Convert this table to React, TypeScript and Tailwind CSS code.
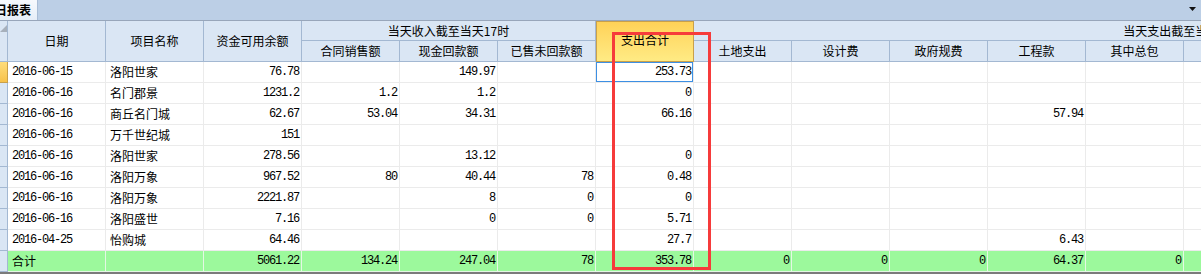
import React from 'react';

const cjk = "font-['Noto_Sans_CJK_SC','Noto_Sans_CJK_JP',sans-serif]";
const mono = "font-['Liberation_Mono',monospace] text-[12px] tracking-[-1.2px]";

type Row = { date: string; name: string; vals: string[] };

// vals: 资金可用余额, 合同销售额, 现金回款额, 已售未回款额, 支出合计, 土地支出, 设计费, 政府规费, 工程款, 其中总包
const rows: Row[] = [
  { date: '2016-06-15', name: '洛阳世家', vals: ['76.78', '', '149.97', '', '253.73'] },
  { date: '2016-06-16', name: '名门郡景', vals: ['1231.2', '1.2', '1.2', '', '0'] },
  { date: '2016-06-16', name: '商丘名门城', vals: ['62.67', '53.04', '34.31', '', '66.16', '', '', '', '57.94'] },
  { date: '2016-06-16', name: '万千世纪城', vals: ['151', '', '', '', ''] },
  { date: '2016-06-16', name: '洛阳世家', vals: ['278.56', '', '13.12', '', '0'] },
  { date: '2016-06-16', name: '洛阳万象', vals: ['967.52', '80', '40.44', '78', '0.48'] },
  { date: '2016-06-16', name: '洛阳万象', vals: ['2221.87', '', '8', '0', '0'] },
  { date: '2016-06-16', name: '洛阳盛世', vals: ['7.16', '', '0', '0', '5.71'] },
  { date: '2016-04-25', name: '怡购城', vals: ['64.46', '', '', '', '27.7', '', '', '', '6.43'] },
];

const totals = ['5061.22', '134.24', '247.04', '78', '353.78', '0', '0', '0', '64.37', '0'];

const subHeads = ['合同销售额', '现金回款额', '已售未回款额'];
const outHeads = ['土地支出', '设计费', '政府规费', '工程款', '其中总包', '', '', '', '', ''];

function DataRow({ row, index }: { row: Row; index: number }) {
  const cells = Array.from({ length: 15 }, (_, i) => row.vals[i] ?? '');
  return (
    <div className="grid grid-cols-[8px_repeat(17,98px)] h-[21px] w-max">
      {index === 0 ? (
        <div className="border-r border-b border-[#c9a04a] bg-linear-to-b from-[#ffdd7a] to-[#f7c24a]" />
      ) : (
        <div className="border-r border-b border-[#a3b8d2] bg-[#dae6f4]" />
      )}
      <div className={`border-r border-b border-[#ebebeb] pl-1 flex items-center ${mono}`}>{row.date}</div>
      <div className={`border-r border-b border-[#ebebeb] pl-1 flex items-center text-[12px] ${cjk}`}>{row.name}</div>
      {cells.map((v, i) => (
        <div
          key={i}
          className={`border-r border-b border-[#ebebeb] pr-[2px] flex items-center justify-end ${mono} ${
            index === 0 && i === 4 ? 'shadow-[inset_0_0_0_1px_#3d8fe3]' : ''
          }`}
        >
          {v}
        </div>
      ))}
    </div>
  );
}

export default function App() {
  return (
    <div className="relative w-[1201px] h-[274px] overflow-hidden bg-white text-black">
      {/* tab strip */}
      <div className="h-[21px] bg-[#bccfe6] border-b border-[#98a6ba] flex items-stretch justify-between">
        <div className="w-[38px] bg-linear-to-b from-[#f6f9fd] to-[#e6eef8] border-r border-[#a9bdd6] overflow-hidden flex items-center">
          <span className={`ml-[-5px] whitespace-nowrap font-bold text-[12px] ${cjk}`}>日报表</span>
        </div>
        <svg width="8" height="5" viewBox="0 0 8 5" className="mr-[4px] mt-[7px]">
          <path d="M0 0h7L3.5 4z" fill="#111" />
        </svg>
      </div>

      {/* header */}
      <div className={`grid grid-cols-[8px_repeat(17,98px)] grid-rows-[20px_21px] w-max bg-[#dae6f4] text-[12px] ${cjk}`}>
        <div className="row-span-2 border-r border-b border-[#a3b8d2] relative">
          <svg width="8" height="8" viewBox="0 0 8 8" className="absolute left-0 top-[4px]">
            <path d="M7 0v7H0z" fill="#a7b0bb" />
          </svg>
        </div>
        {['日期', '项目名称', '资金可用余额'].map((t) => (
          <div key={t} className="row-span-2 border-r border-b border-[#a3b8d2] flex items-center justify-center">
            {t}
          </div>
        ))}
        <div className="col-span-3 border-r border-b border-[#a3b8d2] flex items-center justify-center whitespace-nowrap">
          当天收入截至当天17时
        </div>
        <div className="row-span-2 border border-[#c9a04a] bg-linear-to-b from-[#ffd257] to-[#ffeb84] flex items-center justify-center pb-[4px]">
          支出合计
        </div>
        <div className="col-span-10 border-b border-[#a3b8d2] flex items-center justify-center whitespace-nowrap">
          当天支出截至当天17时
        </div>
        {subHeads.map((t) => (
          <div key={t} className="border-r border-b border-[#a3b8d2] flex items-center justify-center">
            {t}
          </div>
        ))}
        {outHeads.map((t, i) => (
          <div key={i} className="border-r border-b border-[#a3b8d2] flex items-center justify-center">
            {t}
          </div>
        ))}
      </div>

      {/* body */}
      {rows.map((r, i) => (
        <DataRow key={i} row={r} index={i} />
      ))}

      {/* totals */}
      <div className="grid grid-cols-[8px_repeat(17,98px)] h-[21px] w-max bg-[#9cf99c]">
        <div className="border-r border-b border-[#a3b8d2] bg-[#dae6f4]" />
        <div className={`border-r border-b border-[#e4f7e4] pl-1 flex items-center text-[12px] ${cjk}`}>合计</div>
        <div className="border-r border-b border-[#e4f7e4]" />
        {Array.from({ length: 15 }, (_, i) => totals[i] ?? '').map((v, i) => (
          <div key={i} className={`border-r border-b border-[#e4f7e4] pr-[2px] flex items-center justify-end ${mono}`}>
            {v}
          </div>
        ))}
      </div>
      <div className="h-[2px] bg-[#7b7b7b]" />

      {/* red highlight */}
      <div className="absolute left-[612px] top-[32px] w-[99px] h-[238px] border-[3px] border-[#f63b3b]" />
    </div>
  );
}
